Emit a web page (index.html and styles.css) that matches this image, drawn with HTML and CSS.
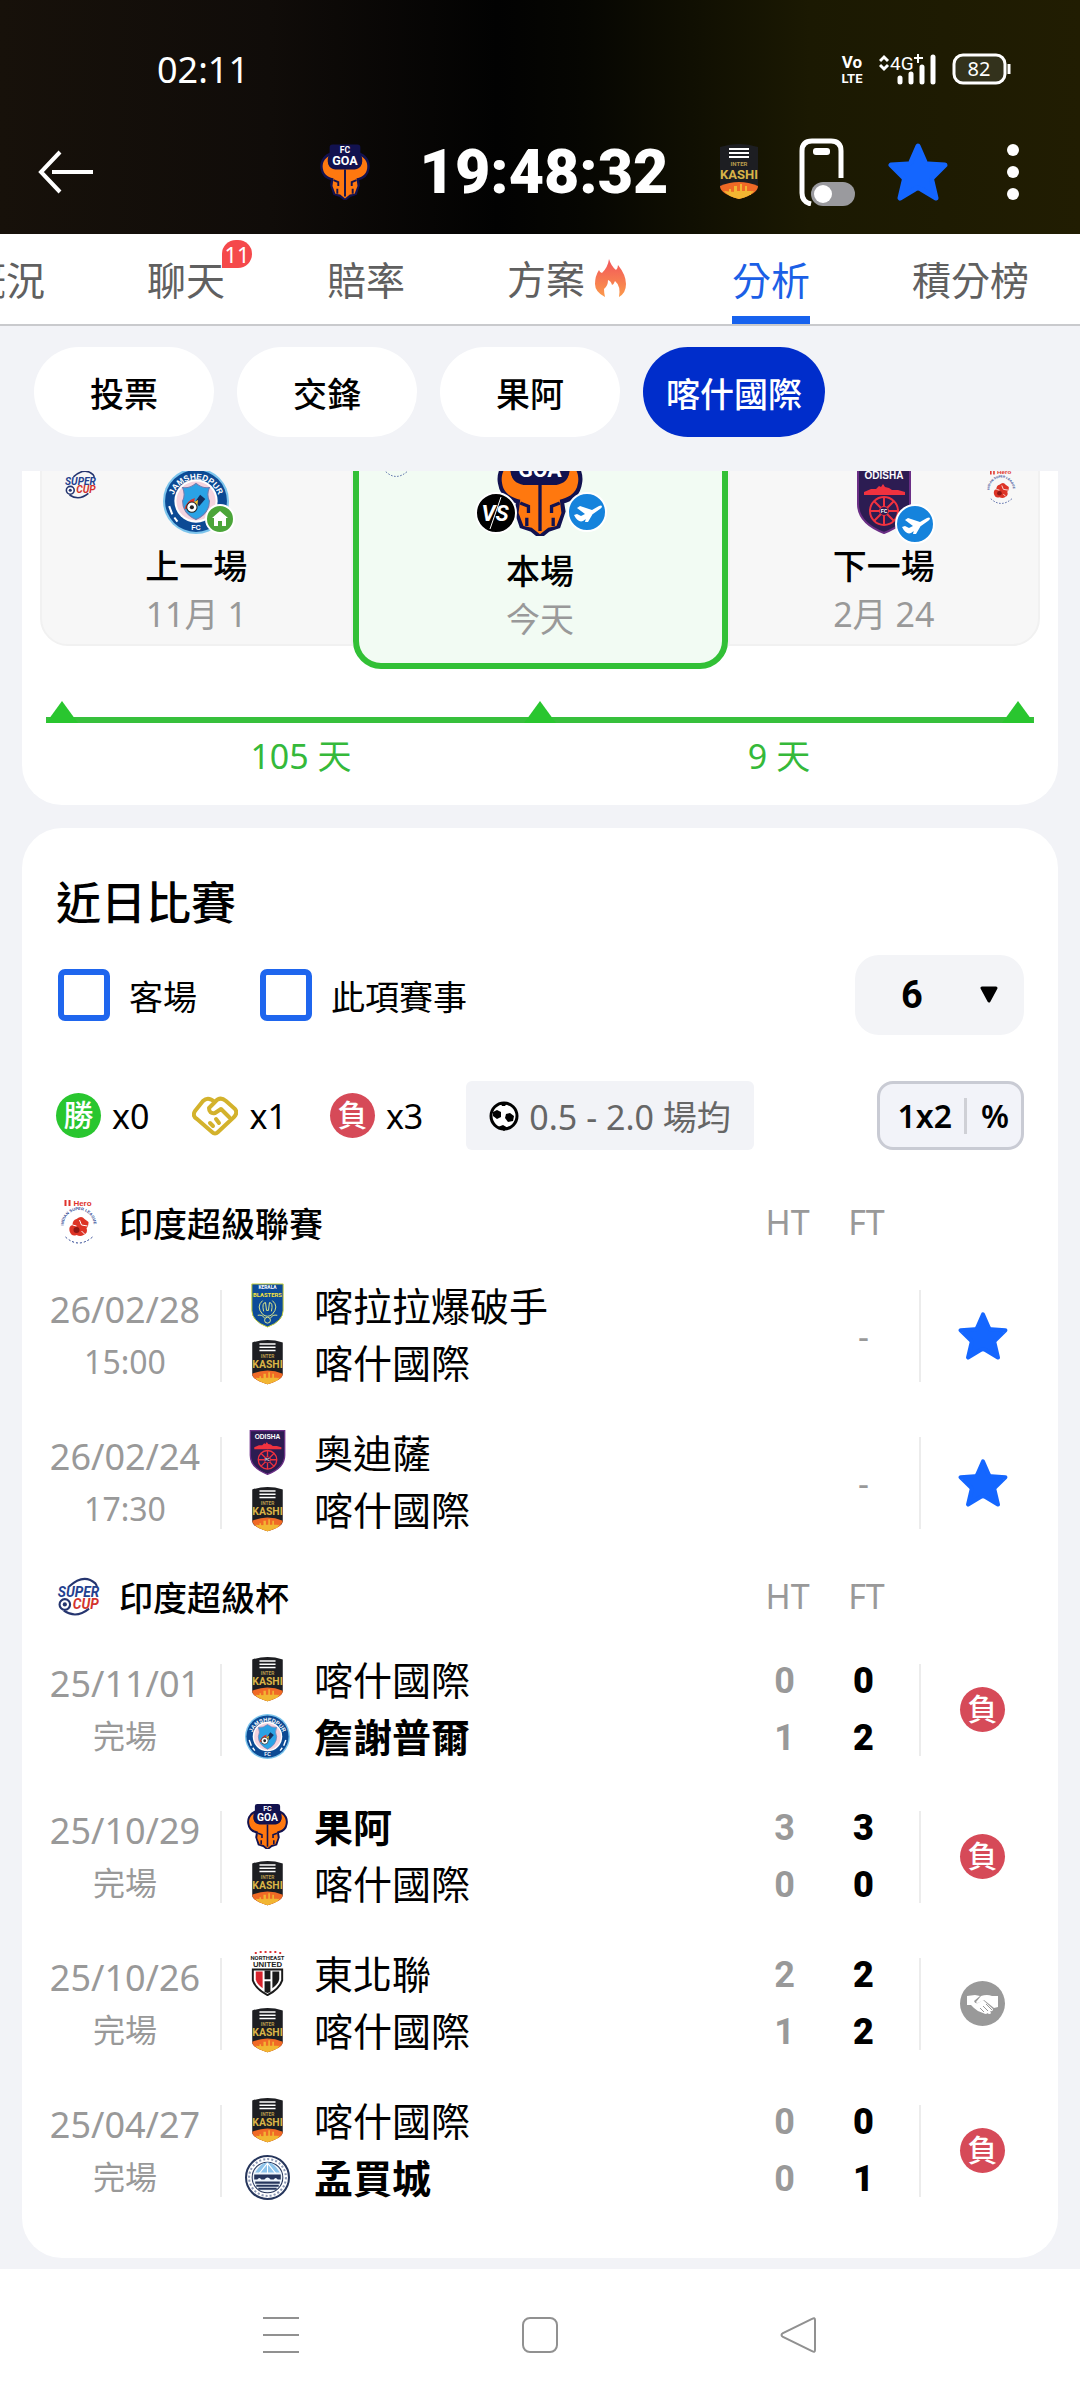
FILE: index.html
```html
<!DOCTYPE html>
<html lang="zh-Hant">
<head>
    <meta charset="UTF-8">
    <meta name="viewport" content="width=device-width, initial-scale=1.0">
    <title>果阿 - 喀什國際 分析</title>
    <link rel="stylesheet" href="styles.css">
</head>
<body>
    <header class="app-header">
        <div class="status-bar">
            <span class="clock">02:11</span>
            <div class="status-icons">
                <svg width="24" height="32" viewBox="0 0 24 32" aria-label="VoLTE">
                    <text x="12" y="15" class="heavy" font-size="17" fill="#fff" text-anchor="middle">Vo</text>
                    <text x="12" y="30" class="heavy" font-size="13" fill="#fff" text-anchor="middle">LTE</text>
                </svg>
                <svg width="58" height="32" viewBox="0 0 58 32" aria-label="4G+">
                    <path d="M1 8l4-4 4 4M1 12l4 4 4-4" fill="none" stroke="#fff" stroke-width="3"/>
                    <text x="11" y="17" font-family="Roboto" font-size="19" fill="#fff">4G</text>
                    <path d="M39 1v9M35 5h9" stroke="#fff" stroke-width="2"/>
                    <path d="M21 25v4M32 21v8M43 14v15M54 4v25" stroke="#fff" stroke-width="5" stroke-linecap="round"/>
                </svg>
                <svg width="60" height="32" viewBox="0 0 60 32" aria-label="82%">
                    <rect x="2" y="2" width="51" height="28" rx="9" fill="#33321c" stroke="#fff" stroke-width="3"/>
                    <path d="M57 11v10" stroke="#fff" stroke-width="3"/>
                    <text x="27" y="23" font-family="Noto Sans" font-size="20" fill="#fff" text-anchor="middle">82</text>
                </svg>
            </div>
        </div>
        <div class="title-bar">
            <button class="icon-btn back" aria-label="返回">
                <svg width="56" height="44" viewBox="0 0 56 44"><path d="M14 22h41M22 2L3 22l19 20" fill="none" stroke="#fff" stroke-width="4"/></svg>
            </button>
            <div class="match-title">
                <svg width="50" height="56" data-crest="goa"></svg>
                <h1>19:48:32</h1>
                <svg width="42" height="56" data-crest="kashi"></svg>
            </div>
            <div class="title-actions">
                <button class="icon-btn" aria-label="懸浮視窗">
                    <svg width="57" height="68" viewBox="0 0 57 68">
                        <path d="M42 40V13q0-10-10-10H13Q3 3 3 13v42q0 9 9 11" fill="none" stroke="#fff" stroke-width="5"/>
                        <rect x="14" y="10" width="17" height="7" rx="3" fill="#fff"/>
                        <rect x="12" y="44" width="44" height="24" rx="12" fill="#9a9a9e"/>
                        <circle cx="24" cy="56" r="9" fill="#fff"/>
                    </svg>
                </button>
                <button class="icon-btn" aria-label="收藏"><svg width="60" height="58" data-crest="star"></svg></button>
                <button class="icon-btn more" aria-label="更多">
                    <svg width="14" height="58" viewBox="0 0 14 58" fill="#fff"><circle cx="7" cy="7" r="6"/><circle cx="7" cy="29" r="6"/><circle cx="7" cy="51" r="6"/></svg>
                </button>
            </div>
        </div>
    </header>

    <nav class="tabs">
        <a href="#">概況</a>
        <a href="#">聊天<span class="badge">11</span></a>
        <a href="#">賠率</a>
        <a href="#" class="with-icon">方案<svg width="45" height="45" viewBox="0 0 45 45">
            <defs><linearGradient id="fire" x1="0" y1="0" x2="0" y2="1"><stop offset="0" stop-color="#f2545b"/><stop offset="1" stop-color="#fb9a4b"/></linearGradient></defs>
            <path d="M24 2q2 7 7 11 2-2 2-5 8 10 8 19 0 9-7 13 2-11-4-16-1 3-3 4-1-4-4-5 0 6-4 9 0 4 1 8Q10 35 10 27q0-8 4-14 1 3 3 3 6-6 7-14z" fill="url(#fire)"/>
        </svg></a>
        <a href="#" class="active">分析</a>
        <a href="#">積分榜</a>
    </nav>

    <div class="chips">
        <button class="chip">投票</button>
        <button class="chip">交鋒</button>
        <button class="chip">果阿</button>
        <button class="chip selected">喀什國際</button>
    </div>

    <main class="content">
        <section class="card schedule">
            <div class="fixtures">
                <div class="fixture">
                    <svg class="mini-league left" width="33" height="30" data-crest="supercup"></svg>
                    <div class="crest">
                        <svg width="66" height="66" data-crest="jamshedpur"></svg>
                        <svg class="venue" width="30" height="30" viewBox="0 0 30 30"><circle cx="15" cy="15" r="14" fill="#4ba539" stroke="#fff" stroke-width="2"/><path d="M15 7l8 7h-2v8h-4v-5h-4v5H9v-8H7z" fill="#fff"/></svg>
                    </div>
                    <strong>上一場</strong>
                    <span>11月 1</span>
                </div>
                <div class="fixture current">
                    <svg class="mini-league left" width="30" height="36" data-crest="isl"></svg>
                    <div class="crest">
                        <svg width="86" height="94" data-crest="goa"></svg>
                        <svg class="versus" width="42" height="42" viewBox="0 0 42 42"><circle cx="21" cy="21" r="20" fill="#000" stroke="#fff" stroke-width="2"/><text x="20" y="29" class="heavy italic" font-size="22" fill="#fff" text-anchor="middle">VS</text><path d="M26 5L15 37" stroke="#fff"/></svg>
                        <svg class="venue" width="40" height="40" data-crest="plane"></svg>
                    </div>
                    <strong>本場</strong>
                    <span>今天</span>
                </div>
                <div class="fixture">
                    <svg class="mini-league right" width="30" height="36" data-crest="isl"></svg>
                    <div class="crest">
                        <svg width="54" height="68" data-crest="odisha"></svg>
                        <svg class="venue" width="40" height="40" data-crest="plane"></svg>
                    </div>
                    <strong>下一場</strong>
                    <span>2月 24</span>
                </div>
            </div>
            <div class="timeline">
                <svg width="32" height="16" viewBox="0 0 32 16"><path d="M16 0l16 22H0z"/></svg>
                <svg width="32" height="16" viewBox="0 0 32 16"><path d="M16 0l16 22H0z"/></svg>
                <svg width="32" height="16" viewBox="0 0 32 16"><path d="M16 0l16 22H0z"/></svg>
            </div>
            <div class="timeline-labels"><span>105 天</span><span>9 天</span></div>
        </section>

        <section class="card recent">
            <h2>近日比賽</h2>
            <div class="filters">
                <label><input type="checkbox">客場</label>
                <label><input type="checkbox">此項賽事</label>
                <div class="count">
                    <select aria-label="場數"><option>6</option><option>10</option><option>20</option></select>
                    <svg width="18" height="17" viewBox="0 0 18 17"><path d="M2 2h14L9 15z" stroke="#000" stroke-width="3" stroke-linejoin="round"/></svg>
                </div>
            </div>
            <div class="summary">
                <span class="tally"><i class="result win">勝</i>x0</span>
                <span class="tally">
                    <svg width="46" height="40" viewBox="0 0 46 40" fill="none" stroke="#d3b22c" stroke-width="4" stroke-linejoin="round" stroke-linecap="round">
                        <path d="M23 6q-7-6-12-1L3 15q-3 5 2 8l15 13q3 3 6 0l16-15q4-4 1-8l-9-8q-6-5-11 1l-6 6q0 6 6 5l6-4 8 8"/>
                        <path d="M18 27l3 3M24 23l3 4"/>
                    </svg>x1</span>
                <span class="tally"><i class="result loss">負</i>x3</span>
                <span class="goals">
                    <svg width="30" height="30" viewBox="0 0 30 30"><circle cx="15" cy="15" r="13" fill="#fff" stroke="#000" stroke-width="3"/><path d="M8 9l4 2v5l-4 2-4-3v-4zM21 12l4 3-1 5-5 1-3-4 1-4zM11 1l8 0-3 4h-3zM9 26l5-2 5 3-4 3z"/></svg>
                    0.5 - 2.0 場均
                </span>
                <button class="odds-toggle"><span>1x2</span><span>%</span></button>
            </div>

            <table class="matches">
                <colgroup><col class="c-date"><col><col class="c-score"><col class="c-score"><col class="c-result"></colgroup>
                <tbody>
                    <tr class="league">
                        <th colspan="2"><div><svg width="45" height="46" data-crest="isl"></svg>印度超級聯賽</div></th>
                        <th>HT</th>
                        <th>FT</th>
                        <th></th>
                    </tr>
                    <tr>
                        <td><div class="date"><span>26/02/28</span><small>15:00</small></div></td>
                        <td><div class="teams"><span><svg data-crest="blasters"></svg>喀拉拉爆破手</span><span><svg data-crest="kashi"></svg>喀什國際</span></div></td>
                        <td></td>
                        <td class="pending">-</td>
                        <td><div class="outcome"><button class="icon-btn" aria-label="收藏"><svg width="50" height="48" data-crest="star"></svg></button></div></td>
                    </tr>
                    <tr>
                        <td><div class="date"><span>26/02/24</span><small>17:30</small></div></td>
                        <td><div class="teams"><span><svg data-crest="odisha"></svg>奧迪薩</span><span><svg data-crest="kashi"></svg>喀什國際</span></div></td>
                        <td></td>
                        <td class="pending">-</td>
                        <td><div class="outcome"><button class="icon-btn" aria-label="收藏"><svg width="50" height="48" data-crest="star"></svg></button></div></td>
                    </tr>
                </tbody>
                <tbody>
                    <tr class="league">
                        <th colspan="2"><div><svg width="45" height="40" data-crest="supercup"></svg>印度超級杯</div></th>
                        <th>HT</th>
                        <th>FT</th>
                        <th></th>
                    </tr>
                    <tr>
                        <td><div class="date"><span>25/11/01</span><small>完場</small></div></td>
                        <td><div class="teams"><span><svg data-crest="kashi"></svg>喀什國際</span><span class="winner"><svg data-crest="jamshedpur"></svg>詹謝普爾</span></div></td>
                        <td><div class="score ht"><span>0</span><span>1</span></div></td>
                        <td><div class="score"><span>0</span><span>2</span></div></td>
                        <td><div class="outcome"><i class="result loss">負</i></div></td>
                    </tr>
                    <tr>
                        <td><div class="date"><span>25/10/29</span><small>完場</small></div></td>
                        <td><div class="teams"><span class="winner"><svg data-crest="goa"></svg>果阿</span><span><svg data-crest="kashi"></svg>喀什國際</span></div></td>
                        <td><div class="score ht"><span>3</span><span>0</span></div></td>
                        <td><div class="score"><span>3</span><span>0</span></div></td>
                        <td><div class="outcome"><i class="result loss">負</i></div></td>
                    </tr>
                    <tr>
                        <td><div class="date"><span>25/10/26</span><small>完場</small></div></td>
                        <td><div class="teams"><span><svg data-crest="northeast"></svg>東北聯</span><span><svg data-crest="kashi"></svg>喀什國際</span></div></td>
                        <td><div class="score ht"><span>2</span><span>1</span></div></td>
                        <td><div class="score"><span>2</span><span>2</span></div></td>
                        <td><div class="outcome"><svg width="45" height="45" data-crest="shake"></svg></div></td>
                    </tr>
                    <tr>
                        <td><div class="date"><span>25/04/27</span><small>完場</small></div></td>
                        <td><div class="teams"><span><svg data-crest="kashi"></svg>喀什國際</span><span class="winner"><svg data-crest="mumbai"></svg>孟買城</span></div></td>
                        <td><div class="score ht"><span>0</span><span>0</span></div></td>
                        <td><div class="score"><span>0</span><span>1</span></div></td>
                        <td><div class="outcome"><i class="result loss">負</i></div></td>
                    </tr>
                </tbody>
            </table>
        </section>
    </main>

    <footer class="system-nav">
        <button class="icon-btn" aria-label="選單"><svg width="38" height="38" viewBox="0 0 38 38"><path d="M1 2h36M1 19h36M1 36h36"/></svg></button>
        <button class="icon-btn" aria-label="主畫面"><svg width="38" height="38" viewBox="0 0 38 38"><rect x="2" y="2" width="34" height="34" rx="7"/></svg></button>
        <button class="icon-btn" aria-label="上一頁"><svg width="38" height="38" viewBox="0 0 38 38"><path d="M35 4v30q0 3-3 1L3 21q-3-2 0-4L32 3q3-2 3 1z"/></svg></button>
    </footer>

    <script src="crests.js"></script>
</body>
</html>
```

FILE: crests.js
```js
// Club, league and result symbols, filled into every <svg data-crest="...">
const crests = {
    goa: ['-2 -1 52 57', `
        <path d="M8 9C1 12-1 19 0 24c1 7 6 10 11 11l-1 6 3 9 6 2 5 4 5-4 6-2 3-9-1-6c5-1 10-4 11-11 1-5-1-12-8-15z" fill="#12124f" stroke="#12124f" stroke-width="3"/>
        <path d="M9 10C2 13 0 19 1 24c1 7 7 9 11 10l-1 8 3 8 5 1 5 4 5-4 5-1 3-8-1-8c4-1 10-3 11-10 1-5-1-11-8-14 5 8 2 14-5 15H14C7 24 4 18 9 10z" fill="#ff780f"/>
        <path d="M11-1h26q3 0 3 3v6c4 8 2 15-6 16H14C6 23 4 16 8 8V2q0-3 3-3z" fill="#12124f"/>
        <path d="M24 25v28M12 36l5 2v4M36 36l-5 2v4M16 45v5M32 45v5" stroke="#12124f" stroke-width="2" fill="none"/>
        <text x="24" y="8" class="heavy" font-size="9" fill="#fff" text-anchor="middle">FC</text>
        <text x="24" y="20" class="heavy" font-size="13" fill="#fff" text-anchor="middle">GOA</text>`],
    kashi: ['0 0 40 56', `
        <path d="M1 3Q20-3 39 3v40q0 6-19 12Q1 49 1 43z" fill="#1d1e22"/>
        <path d="M1 42q19-8 38 0 0 8-19 13Q1 50 1 42z" fill="#f06a26"/>
        <path d="M5 47q15 2 30 0-3 5-15 8Q8 52 5 47z" fill="#f2b632"/>
        <path d="M10 49v-4h2v3h3v-6h3v5h3v-7h2v7h3v-5h2v5h4v4z" fill="#f2b632"/>
        <path d="M10 5h20M10 9h20M10 13h20" stroke="#fff" stroke-width="2"/>
        <text x="20" y="22" class="heavy" font-size="6" fill="#b79b4d" text-anchor="middle">INTER</text>
        <text x="20" y="35" class="heavy" font-size="13" fill="#d9b347" text-anchor="middle">KASHI</text>`],
    jamshedpur: ['0 0 64 64', `
        <circle cx="32" cy="32" r="32" fill="#7cc4ec"/>
        <circle cx="32" cy="32" r="30" fill="#0c4a94"/>
        <circle cx="32" cy="32" r="21" fill="#fff"/>
        <circle cx="32" cy="32" r="19" fill="#f4d3de"/>
        <path d="M19 19q7 1 13-4 6 5 13 4-3 7 0 13 0 12-13 18Q19 44 19 32q3-6 0-13z" fill="#2aa3e6" stroke="#6f7bb0"/>
        <path d="M36 26l5 4-6 7-4-4z" fill="#12305f"/>
        <path d="M21 40q1-8 10-11-2 4 2 7z" fill="#e2342b"/>
        <path d="M28 34l6-3-1 7z" fill="#f3c832"/>
        <circle cx="28" cy="38" r="5" fill="#fff" stroke="#222"/>
        <circle cx="28" cy="38" r="2" fill="#222"/>
        <path id="ring" d="M9 34a23 23 0 1 1 46 0" fill="none"/>
        <text class="crest-text" font-size="8" fill="#fff"><textPath href="#ring" startOffset="50%" text-anchor="middle">JAMSHEDPUR</textPath></text>
        <text x="32" y="60" class="crest-text" font-size="7" fill="#fff" text-anchor="middle">FC</text>
        <path d="M6 37l3 8M58 37l-3 8M11 48l3 4M53 48l-3 4" stroke="#fff" stroke-width="2"/>`],
    odisha: ['0 0 54 68', `
        <path d="M1 1h52v37q0 19-26 29Q1 57 1 38z" fill="#2c1c52" stroke="#6b2f86" stroke-width="2"/>
        <text x="27" y="13" class="crest-text" font-size="10" fill="#fff" text-anchor="middle">ODISHA</text>
        <path d="M7 26l7-3h5l3-3 2 1 2-3 2 3 4 1 3 2h6l7 2v3H7z" fill="#f0323f"/>
        <g stroke="#f0323f" fill="none" stroke-width="2">
            <circle cx="27" cy="45" r="14"/>
            <circle cx="27" cy="45" r="4"/>
            <path d="M27 31v28M13 45h28M17 35l20 20M37 35L17 55"/>
        </g>
        <circle cx="27" cy="45" r="4" fill="#2c1c52"/>
        <text x="27" y="47" class="crest-text" font-size="5" fill="#fff" text-anchor="middle">FC</text>`],
    blasters: ['0 0 34 46', `
        <path d="M1 1h32v27q0 11-16 17Q1 39 1 28z" fill="#0d4b98" stroke="#c9d23c"/>
        <text x="17" y="6" class="heavy" font-size="5" fill="#fff" text-anchor="middle">KERALA</text>
        <text x="17" y="14" class="heavy" font-size="6" fill="#f7e23b" text-anchor="middle">BLASTERS</text>
        <g fill="none" stroke="#dfe78a">
            <path d="M12 18q-7 6 0 14 5 4 10 0 7-8 0-14"/>
            <path d="M13 29q-2-9 2-9l1 8h2l1-8q4 0 2 9"/>
            <path d="M7 33q5-1 7 3M27 33q-5-1-7 3"/>
            <circle cx="17" cy="38" r="3"/>
        </g>`],
    northeast: ['0 0 36 46', `
        <path d="M5 2h2M10 1h2M15 1h2M20 1h2M25 1h2M30 2h2" stroke="#d33" stroke-width="2"/>
        <text x="18" y="9" class="heavy" font-size="6" fill="#222" text-anchor="middle">NORTHEAST</text>
        <text x="18" y="16" class="crest-text" font-size="8" fill="#222" text-anchor="middle">UNITED</text>
        <path d="M3 19h30v11q-3 9-15 15Q6 39 3 30z" fill="#fff" stroke="#1a1a1a" stroke-width="2"/>
        <path d="M6 21h7v17q-6-4-7-9z" fill="#d8232c"/>
        <path d="M15 20h6v9h-6zM15 31h6v11l-3 1-3-1zM23 21h7v8q-1 5-7 9z" fill="#1a1a1a"/>`],
    mumbai: ['0 0 44 44', `
        <circle cx="22" cy="22" r="21" fill="#fff" stroke="#26365c" stroke-width="2"/>
        <circle cx="22" cy="22" r="18" fill="none" stroke="#8c98b4" stroke-width="2" stroke-dasharray="2 2"/>
        <circle cx="22" cy="22" r="15" fill="#eef5fb" stroke="#26365c"/>
        <path d="M10 17q12-20 24 0z" fill="#8cc3ea"/>
        <path d="M22 8l-8 10M22 8l8 10M22 8v10" stroke="#fff"/>
        <path d="M9 19h26v5h-3q-2-3-4 0h-3q-3-4-6 0h-3q-2-3-4 0H9z" fill="#26365c"/>
        <path d="M10 27h24M11 30h22M13 33h18" stroke="#26365c" stroke-width="2"/>`],
    isl: ['0 0 38 46', `
        <path d="M6 1v6M10 1v6" stroke="#e0342c" stroke-width="2"/>
        <text x="23" y="7" class="crest-text" font-size="8" fill="#e0342c" text-anchor="middle">Hero</text>
        <path id="isl-ring" d="M6 33a15 15 0 1 1 27-1" fill="none"/>
        <text class="crest-text" font-size="4" fill="#27408f"><textPath href="#isl-ring" startOffset="50%" text-anchor="middle">INDIAN SUPER LEAGUE</textPath></text>
        <path d="M6 38q13 12 27 0" fill="none" stroke="#27408f" stroke-dasharray="2 2"/>
        <path d="M17 20q5-4 8 0l4 3q0 5-2 6 2 5-3 7-3 2-7 0-5 2-7-4-1-5 3-6 0-5 4-6z" fill="#dd3426"/>
        <circle cx="17" cy="31" r="3" fill="#8d1714"/>
        <path d="M20 21l2 5 6 1M13 26l4 1M22 32l3 3" stroke="#fff" fill="none"/>`],
    supercup: ['0 0 42 38', `
        <path d="M12 10Q26-3 37 7q2 3 1 4" fill="none" stroke="#25356f" stroke-width="2"/>
        <path d="M7 33q12 8 24-2" fill="none" stroke="#25356f" stroke-width="2"/>
        <text x="21" y="20" class="heavy italic" font-size="13" fill="#23418f" text-anchor="middle">SUPER</text>
        <text x="28" y="31" class="heavy italic" font-size="13" fill="#d3332c" text-anchor="middle">CUP</text>
        <circle cx="8" cy="27" r="5" fill="#fff" stroke="#25356f" stroke-width="2"/>
        <circle cx="8" cy="27" r="2" fill="#25356f"/>`],
    star: ['0 0 60 58', `
        <path d="M30 3l7 16q1 2 3 2l17 1-12 12q-2 2-1 4l4 17-15-9q-3-2-6 0l-15 9 4-17q1-2-1-4L3 22l17-1q2 0 3-2z" fill="#1466ff" stroke="#1466ff" stroke-width="5" stroke-linejoin="round"/>`],
    plane: ['0 0 40 40', `
        <circle cx="20" cy="20" r="19" fill="#1583dc" stroke="#fff" stroke-width="2"/>
        <path d="M7 23l3-1 4 2 4-2-8-6 3-2 12 4 7-4q2-1 3 0 0 2-2 3L16 29q-5 2-9-6zM20 22l8-4-7 12h-3z" fill="#fff"/>`],
    shake: ['0 0 45 45', `
        <circle cx="22.5" cy="22.5" r="22.5" fill="#999"/>
        <path d="M7 15l8-1 5 1-6 5q1 3 4 2l5-3 10 9q0 3-3 2l1 2q-1 2-4 0 0 2-4 0-5-1-9-5l-3-3-4 0z" fill="#fff"/>
        <path d="M21 15q6-2 11 0l6 0v11l-4 1-10-8-6 3q-2 0-2-1z" fill="#fff"/>
        <path d="M20 27l4 4M23 25l5 5M26 23l6 6" stroke="#999"/>`]
};

document.querySelectorAll('svg[data-crest]').forEach(svg => {
    const [viewBox, shapes] = crests[svg.dataset.crest];
    svg.setAttribute('viewBox', viewBox);
    svg.innerHTML = shapes;
});
```

FILE: styles.css
```css
* {
    box-sizing: border-box;
}
body {
    margin: 0;
    min-height: 100vh;
    display: flex;
    flex-direction: column;
    background: #f2f3f7;
    color: #000;
    font-family: "Noto Sans", "Noto Sans CJK TC", sans-serif;
    font-size: 34px;
}
svg {
    display: block;
    flex: none;
}
button, select, input {
    font: inherit;
    color: inherit;
    margin: 0;
}
.heavy {
    font-family: Roboto, sans-serif;
    font-weight: bold;
}
.crest-text {
    font-family: "Liberation Sans", sans-serif;
    font-weight: bold;
}
.italic {
    font-style: italic;
}
.icon-btn {
    display: flex;
    padding: 0;
    border: 0;
    background: none;
}

/* Header */
.app-header {
    padding-bottom: 28px;
    background: linear-gradient(90deg, #17110a 0%, #100c09 25%, #020202 46%, #060602 54%, #1b1902 75%, #211d02 100%);
    color: #fff;
}
.status-bar {
    display: flex;
    justify-content: space-between;
    align-items: center;
    height: 138px;
    padding: 0 68px 0 157px;
}
.clock {
    font-size: 36px;
}
.status-icons {
    display: flex;
    align-items: center;
    gap: 15px;
}
.title-bar {
    display: grid;
    grid-template-columns: 1fr auto 1fr;
    align-items: center;
}
.back {
    margin-left: 38px;
}
.match-title {
    display: flex;
    align-items: center;
    gap: 50px;
}
.match-title h1 {
    margin: 0;
    font-family: Roboto, sans-serif;
    font-size: 61px;
    font-weight: 900;
    line-height: 68px;
}
.title-actions {
    display: flex;
    align-items: center;
    gap: 32px;
    margin-left: 39px;
}
.more {
    margin-left: 26px;
}

/* Tabs */
.tabs {
    display: flex;
    height: 92px;
    margin-left: -84px;
    background: #fff;
    border-bottom: 2px solid #c9cacd;
}
.tabs a {
    position: relative;
    flex: none;
    margin: 0 51px;
    color: #606060;
    font-size: 39px;
    line-height: 92px;
    text-decoration: none;
}
.tabs .with-icon {
    display: flex;
    align-items: center;
}
.tabs .active {
    color: #1b5fe6;
    border-bottom: 8px solid #1762ee;
}
.badge {
    position: absolute;
    top: 6px;
    left: 75px;
    width: 30px;
    height: 28px;
    border-radius: 15px 15px 15px 0;
    background: #f5494b;
    color: #fff;
    font-size: 22px;
    line-height: 28px;
    text-align: center;
}

/* Team filter */
.chips {
    display: flex;
    gap: 23px;
    padding: 21px 34px 34px;
}
.chip {
    min-width: 180px;
    height: 90px;
    padding: 0 23px;
    border: 0;
    border-radius: 45px;
    background: #fff;
    font-weight: 500;
    white-space: nowrap;
}
.chip.selected {
    background: #002dcb;
    color: #fff;
}

.content {
    flex: 1;
    overflow: hidden;
    padding: 0 22px 11px;
}
.card {
    background: #fff;
    border-radius: 40px;
}

/* Previous / current / next match */
.schedule {
    margin-top: -171px;
    padding: 28px 18px 25px;
}
.fixtures {
    display: grid;
    grid-template-columns: 5fr 6fr 5fr;
    align-items: center;
}
.fixture {
    position: relative;
    display: flex;
    flex-direction: column;
    align-items: center;
    padding: 113px 0 6px;
    border: 2px solid #f1f1f1;
    border-radius: 28px 0 0 28px;
    background: #f7f7f7;
    line-height: 48px;
}
.fixture:last-child {
    border-radius: 0 28px 28px 0;
}
.fixture.current {
    padding: 108px 0 20px;
    border: 6px solid #32c036;
    border-radius: 28px;
    background: #f2fbf3;
}
.fixture strong {
    font-weight: 500;
}
.fixture span {
    color: #999;
}
.crest {
    position: relative;
    display: flex;
    justify-content: center;
    align-items: flex-end;
    height: 68px;
    margin-bottom: 8px;
}
.current .crest {
    height: 94px;
    margin-bottom: 11px;
}
.venue {
    position: absolute;
    right: -6px;
    bottom: 0;
}
.fixture:last-child .venue {
    right: -24px;
    bottom: -10px;
}
.current .venue {
    right: -24px;
    bottom: 4px;
}
.versus {
    position: absolute;
    left: -22px;
    bottom: 2px;
}
.mini-league {
    position: absolute;
    top: 116px;
}
.mini-league.left {
    left: 22px;
}
.mini-league.right {
    right: 22px;
}
.current .mini-league {
    top: 108px;
}
.timeline {
    display: flex;
    justify-content: space-between;
    margin: 32px 6px 0;
    border-bottom: 6px solid #37c03c;
}
.timeline svg {
    overflow: visible;
    fill: #29c62f;
}
.timeline-labels {
    display: grid;
    grid-template-columns: 1fr 1fr;
    margin: 9px 22px 0;
    color: #35b93a;
    line-height: 48px;
    text-align: center;
}

/* Recent matches */
.recent {
    margin-top: 23px;
    padding: 45px 0 34px;
}
.recent h2 {
    margin: 0 34px;
    font-size: 45px;
    font-weight: 500;
    line-height: 60px;
}
.filters {
    display: flex;
    align-items: center;
    gap: 63px;
    margin: 22px 34px 0 36px;
}
.filters label {
    display: flex;
    align-items: center;
    gap: 19px;
}
.filters input {
    appearance: none;
    width: 52px;
    height: 52px;
    border: 6px solid #1f66ee;
    border-radius: 7px;
    background: #fff;
}
.count {
    position: relative;
    margin-left: auto;
}
.count select {
    appearance: none;
    width: 169px;
    height: 80px;
    padding: 0 46px;
    border: 0;
    border-radius: 24px;
    background: #f3f4f7;
    font-family: Roboto, sans-serif;
    font-size: 38px;
    font-weight: bold;
}
.count svg {
    position: absolute;
    right: 26px;
    top: 31px;
    pointer-events: none;
}
.summary {
    display: flex;
    align-items: center;
    gap: 43px;
    margin: 46px 34px 0;
}
.tally {
    display: flex;
    align-items: center;
    gap: 11px;
}
.result {
    width: 45px;
    height: 45px;
    border-radius: 50%;
    color: #fff;
    font-size: 30px;
    font-style: normal;
    font-weight: 500;
    line-height: 43px;
    text-align: center;
}
.win {
    background: #29c62f;
}
.loss {
    background: #d64a58;
}
.goals {
    display: flex;
    align-items: center;
    gap: 10px;
    height: 69px;
    padding: 0 23px;
    border-radius: 6px;
    background: #f2f3f7;
    color: #666;
    white-space: nowrap;
}
.odds-toggle {
    display: flex;
    align-items: center;
    height: 69px;
    margin-left: auto;
    padding: 0 12px 0 17px;
    border: 3px solid #c9cbd4;
    border-radius: 16px;
    background: #f2f3f9;
    font-size: 32px;
    font-weight: 600;
}
.odds-toggle span + span {
    margin-left: 12px;
    padding-left: 14px;
    border-left: 3px solid #cfd0d6;
    line-height: 36px;
}

.matches {
    width: 100%;
    margin-top: 32px;
    border-collapse: collapse;
    table-layout: fixed;
}
.matches td, .matches th {
    padding: 0;
}
.c-date {
    width: 200px;
}
.c-score {
    width: 79px;
}
.c-result {
    width: 155px;
}
.league th {
    height: 80px;
    padding-left: 6px;
    color: #999;
    font-weight: normal;
}
.league th:first-child {
    padding-left: 34px;
    color: #000;
    font-weight: 500;
}
.league div {
    display: flex;
    align-items: center;
    gap: 18px;
}
.matches td {
    height: 147px;
    text-align: center;
}
.date {
    display: flex;
    flex-direction: column;
    gap: 12px;
    padding-left: 8px;
    border-right: 2px solid #ececec;
    color: #999;
    line-height: 40px;
}
.date span {
    font-size: 36px;
}
.date small {
    font-size: 32px;
}
.teams {
    display: flex;
    flex-direction: column;
    gap: 12px;
    padding: 0 0 4px 23px;
    font-size: 39px;
    line-height: 45px;
}
.teams span {
    display: flex;
    align-items: center;
    gap: 24px;
    white-space: nowrap;
}
.teams svg {
    width: 45px;
    height: 45px;
}
.teams .winner {
    font-weight: bold;
}
.score {
    display: flex;
    flex-direction: column;
    gap: 12px;
    font-family: Roboto, sans-serif;
    font-size: 36px;
    font-weight: 900;
    line-height: 45px;
}
.score.ht {
    color: #999;
    font-weight: bold;
}
.pending {
    color: #999;
}
.outcome {
    display: flex;
    justify-content: center;
    align-items: center;
    height: 92px;
    margin-left: 16px;
    padding-right: 14px;
    border-left: 2px solid #ececec;
}

/* Android navigation */
.system-nav {
    display: grid;
    grid-template-columns: repeat(3, 1fr);
    align-items: center;
    justify-items: center;
    height: 132px;
    padding: 0 14%;
    background: #fff;
}
.system-nav svg {
    fill: none;
    stroke: #919191;
    stroke-width: 2;
}
```
